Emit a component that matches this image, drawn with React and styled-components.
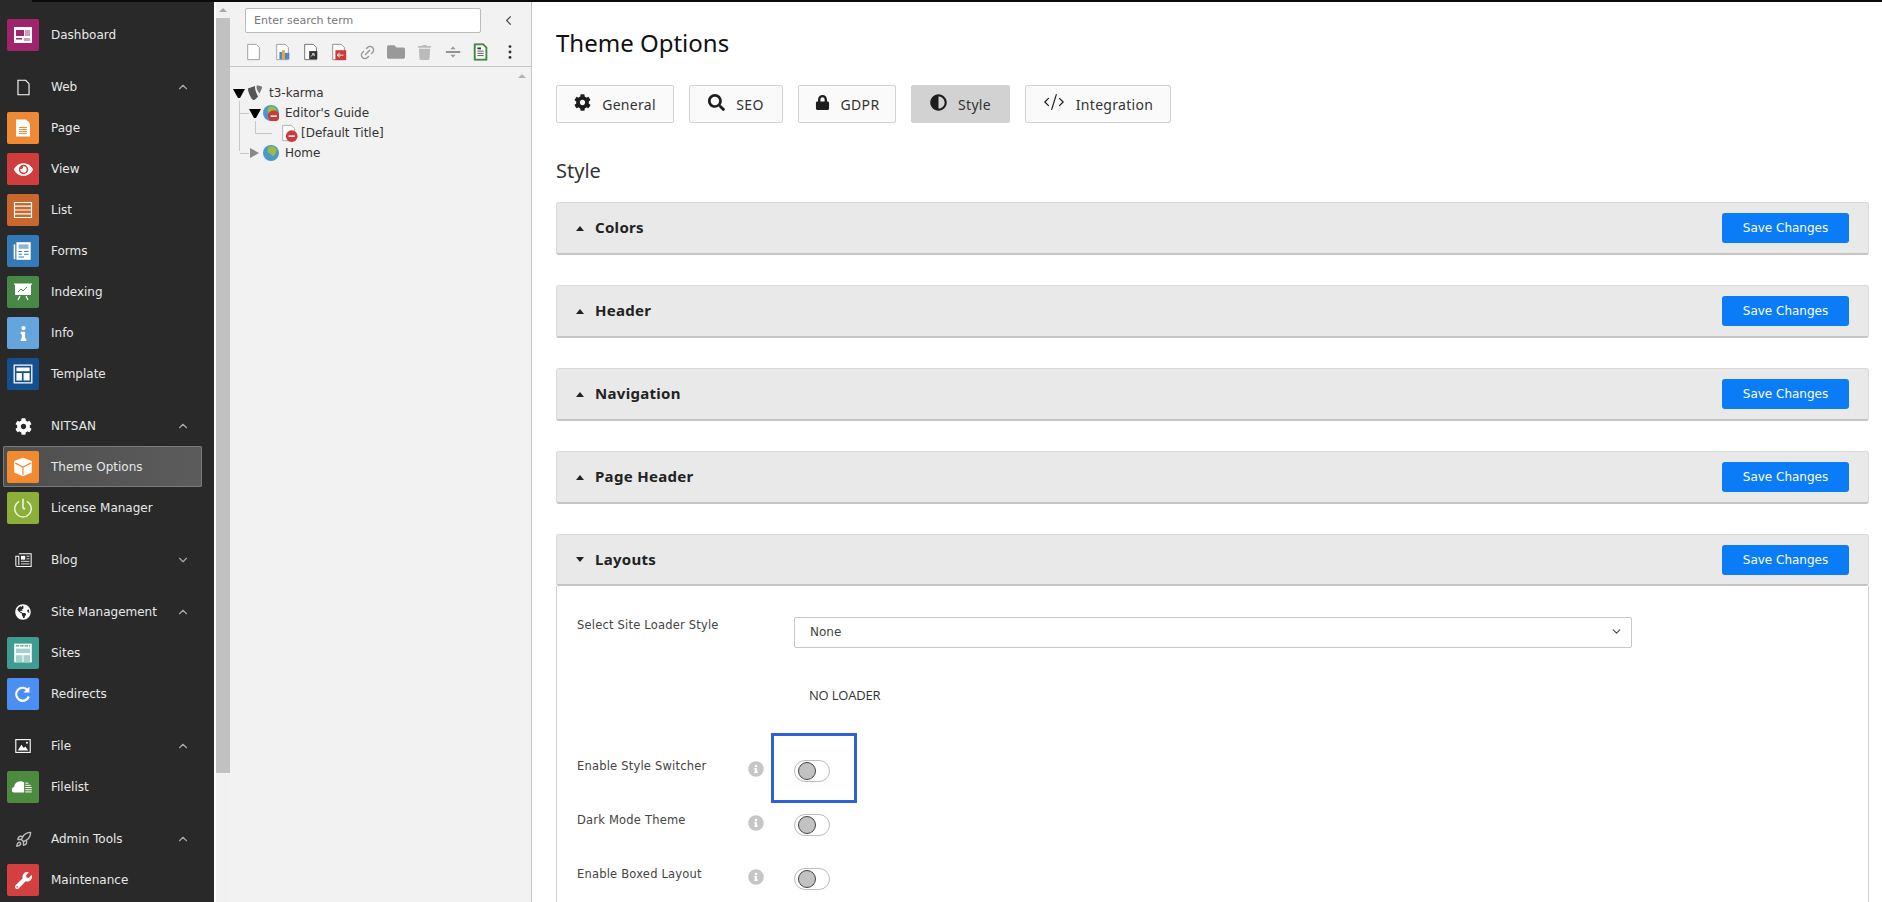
import React from 'react';
import styled, { createGlobalStyle } from 'styled-components';
import { ChevronUp, ChevronDown, ChevronLeft, Rocket, CodeXml, Link2 } from 'lucide-react';
import {
  FaCog,
  FaSearch,
  FaLock,
  FaAdjust,
  FaEye,
  FaInfo,
  FaWrench,
  FaGlobeAmericas,
  FaTrash,
  FaFolder,
  FaInfoCircle,
} from 'react-icons/fa';

const GlobalStyle = createGlobalStyle`
  html, body {
    margin: 0;
    padding: 0;
    height: 100%;
    overflow: hidden;
    background: #fff;
  }
  * { box-sizing: border-box; }
`;

const Shell = styled.div`
  width: 1882px;
  height: 902px;
  background: #292929;
  display: flex;
  flex-direction: column;
  overflow: hidden;
  font-family: 'DejaVu Sans', sans-serif;
  font-size: 12px;
`;

const TopBar = styled.div`
  height: 2px;
  margin-left: 32px;
  background: #0b0b0b;
  flex: none;
`;

const Columns = styled.div`
  flex: 1;
  display: flex;
  min-height: 0;
`;

/* module menu */
const Sidebar = styled.nav`
  width: 214px;
  flex: none;
  padding-top: 12px;
  background: #292929;
  color: #e8e8e8;
`;

const Group = styled.div`
  margin-top: 11px;
`;

const Row = styled.div`
  height: 41px;
  margin: 0 12px 0 3px;
  padding: 5px 0 4px 4px;
  display: flex;
  align-items: center;
  gap: 12px;
  border-radius: 2px;
  ${p =>
    p.$active &&
    `
    background: linear-gradient(90deg, #4e4e4e, #5c5c5c);
    box-shadow: inset 0 0 0 1px #7a7a7a;
  `}
`;

const Tile = styled.span`
  width: 32px;
  height: 32px;
  flex: none;
  border-radius: 2px;
  display: flex;
  align-items: center;
  justify-content: center;
  color: #fff;
  background: ${p => p.$color || 'transparent'};
`;

const RowLabel = styled.span`
  flex: 1;
  white-space: nowrap;
`;

const Caret = styled.span`
  display: flex;
  width: 14px;
  margin-right: 12px;
  color: #a8a8a8;
`;

/* page tree scrollbar */
const OuterScroll = styled.div`
  width: 16px;
  flex: none;
  border-left: 2px solid #fff;
  background: #f1f1f1;
  display: flex;
  flex-direction: column;
`;

const ScrollArrow = styled.div`
  height: 16px;
  flex: none;
  display: flex;
  align-items: center;
  justify-content: center;
  &::before {
    content: '';
    border-left: 4px solid transparent;
    border-right: 4px solid transparent;
    border-bottom: 4px solid #a8a8a8;
  }
`;

const ScrollThumb = styled.div`
  height: 755px;
  background: #c1c1c1;
`;

/* page tree */
const TreePanel = styled.aside`
  width: 302px;
  flex: none;
  position: relative;
  background: #f2f2f2;
  border-right: 1px solid #c6c6c6;
  color: #333;
`;

const TreeHead = styled.div`
  height: 65px;
  border-bottom: 1px solid #c4c4c4;
  padding: 6px 0 0 15px;
`;

const SearchRow = styled.div`
  display: flex;
  align-items: center;
  height: 25px;
`;

const SearchInput = styled.div`
  width: 236px;
  height: 25px;
  background: #fff;
  border: 1px solid #bbb;
  border-radius: 2px;
  padding: 0 8px;
  display: flex;
  align-items: center;
  color: #777;
  font-size: 11px;
`;

const Collapse = styled.span`
  display: flex;
  margin-left: 20px;
  color: #555;
`;

const Tools = styled.div`
  display: flex;
  margin: 7px 0 0 -5px;
`;

const Tool = styled.span`
  width: 28.4px;
  height: 24px;
  flex: none;
  display: flex;
  align-items: center;
  justify-content: center;
  color: ${p => p.$color || '#999'};
`;

const TreeArrow = styled.div`
  position: absolute;
  top: 72px;
  right: 5px;
  border-left: 4px solid transparent;
  border-right: 4px solid transparent;
  border-bottom: 4px solid #b4b4b4;
`;

const TreeBody = styled.div`
  padding: 16px 0 0 3px;
`;

const Branch = styled.ul`
  list-style: none;
  margin: 0;
  padding: 0 0 0 ${p => p.$indent || 0}px;
  position: relative;
  &::before {
    content: ${p => (p.$lines ? "''" : 'none')};
    position: absolute;
    left: 6px;
    top: -2px;
    height: ${p => p.$lines}px;
    border-left: 1px solid #c8c8c8;
  }
`;

const Leaf = styled.li`
  position: relative;
  &::before {
    content: ${p => (p.$elbow ? "''" : 'none')};
    position: absolute;
    left: -${p => p.$back}px;
    top: 10px;
    width: ${p => p.$elbow}px;
    border-top: 1px solid #c8c8c8;
  }
`;

const TreeRow = styled.div`
  height: 20px;
  display: flex;
  align-items: center;
  white-space: nowrap;
`;

const Twisty = styled.span`
  width: 12px;
  flex: none;
  margin-right: 2px;
  position: relative;
  &::before {
    content: '';
    display: block;
    ${p =>
      p.$open
        ? `
      border-left: 5px solid transparent;
      border-right: 5px solid transparent;
      border-top: 9px solid #000;
    `
        : `
      border-top: 5px solid transparent;
      border-bottom: 5px solid transparent;
      border-left: 9px solid #888;
      margin-left: 1px;
    `}
  }
`;

const NodeIcon = styled.span`
  width: 16px;
  height: 16px;
  flex: none;
  margin-right: ${p => p.$gap ?? 6}px;
  display: flex;
  align-items: center;
  justify-content: center;
  svg { flex: none; }
`;

/* main content */
const Main = styled.main`
  flex: 1;
  min-width: 0;
  background: #fff;
  padding: 25px 13px 0 24px;
  color: #333;
  font-family: 'Noto Sans', sans-serif;
`;

const Title = styled.h1`
  margin: 0 0 26px;
  font-size: 24px;
  line-height: 32px;
  font-weight: 400;
  color: #111;
`;

const Tabs = styled.div`
  display: flex;
  gap: 15px;
  margin-bottom: 34px;
`;

const TabButton = styled.button`
  height: 38px;
  padding: 0;
  width: ${p => p.$width}px;
  display: flex;
  align-items: center;
  justify-content: center;
  gap: 11px;
  border: 1px solid #d2d2d2;
  border-radius: 2px;
  background: ${p => (p.$active ? '#d2d2d2' : '#fafafa')};
  color: #333;
  font-family: inherit;
  font-size: 14px;
  letter-spacing: 0.3px;
  svg { color: #1d1d1d; margin-top: -4px; }
`;

const Heading = styled.h2`
  margin: 0 0 17px;
  font-size: 20px;
  line-height: 28px;
  font-weight: 400;
  color: #333;
`;

const Panel = styled.section`
  margin-bottom: ${p => (p.$open ? 31 : 30)}px;
`;

const PanelHead = styled.div`
  height: ${p => (p.$open ? 52 : 53)}px;
  display: flex;
  align-items: center;
  padding: 0 19px;
  background: #e9e9e9;
  border: 1px solid #dadada;
  border-bottom: 2px solid #c4c4c4;
  border-radius: 3px;
`;

const PanelTitle = styled.span`
  flex: 1;
  display: flex;
  align-items: center;
  gap: 11px;
  margin-top: -2px;
  font-size: 15px;
  font-weight: 700;
  letter-spacing: 0.3px;
  color: #222;
  &::before {
    content: '';
    margin-top: 2px;
    border-left: 4px solid transparent;
    border-right: 4px solid transparent;
    ${p => (p.$open ? 'border-top: 5px solid #222;' : 'border-bottom: 5px solid #222;')}
  }
`;

const SaveButton = styled.button`
  width: 127px;
  height: 30px;
  border: 0;
  border-radius: 3px;
  background: #0a7cf7;
  color: #fff;
  font-family: 'DejaVu Sans', sans-serif;
  font-size: 12px;
  padding: 0;
`;

const PanelBody = styled.div`
  border: solid #cfcfcf;
  border-width: 0 1px;
  padding: 31px 0 0 20px;
  height: 340px;
  font-family: 'DejaVu Sans', sans-serif;
`;

const FieldRow = styled.div`
  display: grid;
  grid-template-columns: 171px 16px 1fr;
  margin-top: ${p => p.$top || 0}px;
`;

const FieldLabel = styled.label`
  font-size: 11.5px;
  line-height: ${p => p.$line || 12}px;
  color: #444;
  letter-spacing: 0.2px;
`;

const Hint = styled.span`
  display: flex;
  margin-top: 1px;
  color: #c6c6c6;
`;

const SelectBox = styled.div`
  margin-left: 30px;
  width: 838px;
  height: 31px;
  border: 1px solid #c8c8c8;
  border-radius: 2px;
  padding: 0 8px 2px 15px;
  display: flex;
  align-items: center;
  justify-content: space-between;
  font-size: 12px;
  color: #444;
`;

const LoaderPreview = styled.div`
  margin: 38px 0 0 232px;
  font-family: 'Open Sans', sans-serif;
  font-size: 13px;
  line-height: 18px;
  color: #333;
  letter-spacing: -0.2px;
`;

const ToggleCell = styled.div`
  margin-left: 30px;
  position: relative;
  width: 36px;
`;

const Toggle = styled.span`
  width: 36px;
  height: 22px;
  display: flex;
  align-items: center;
  padding-left: 3px;
  background: #fff;
  border: 1px solid #bcbcbc;
  border-radius: 11px;
  &::before {
    content: '';
    width: 16px;
    height: 16px;
    border-radius: 50%;
    background: #c2c2c2;
    border: 1px solid #444;
  }
`;

const Highlight = styled.span`
  position: absolute;
  left: -23px;
  top: -27px;
  width: 86px;
  height: 70px;
  border: 3px solid #2e60d8;
`;

/* module icons, drawn on a 32px tile */
const Svg = ({ size = 20, children, ...rest }) => (
  <svg width={size} height={size} viewBox="0 0 20 20" fill="none" {...rest}>
    {children}
  </svg>
);

const DashboardIcon = () => (
  <Svg size={20}>
    <rect x="1" y="2" width="18" height="16" fill="#fff" />
    <rect x="3" y="5" width="8" height="6" fill="#a0246b" />
    <rect x="12" y="5" width="5" height="6" fill="#d29cbc" />
    <rect x="3" y="13" width="6" height="1.5" fill="#a0246b" />
    <rect x="11" y="13" width="6" height="3" fill="#d29cbc" />
  </Svg>
);

const PageIcon = () => (
  <Svg size={20}>
    <path d="M3 1.500h10l4 4v13H3z" fill="#fff" />
    <path d="M6 9.500h8M6 11.500h8M6 13.500h8M6 15.500h8" stroke="#ee8a35" />
  </Svg>
);

const ListIcon = () => (
  <Svg size={20}>
    <path d="M1.500 2.500h17v15h-17zM1.500 6.200h17M1.500 10h17M1.500 13.800h17" stroke="#fff" strokeWidth="1.200" />
  </Svg>
);

const FormsIcon = () => (
  <Svg size={22}>
    <rect x="4" y="2" width="13" height="16" fill="#fff" />
    <rect x="1.500" y="4" width="1.500" height="13.500" fill="#fff" />
    <rect x="6" y="4" width="9" height="4" fill="#8fb4d6" />
    <path d="M6 10.500h3M11 10.500h4M6 13h3M11 13h4M6 15.500h5" stroke="#337ab7" />
  </Svg>
);

const IndexingIcon = () => (
  <Svg size={20}>
    <rect x="2" y="2" width="16" height="11" fill="#fff" />
    <rect x="1" y="1.500" width="18" height="1.200" fill="#fff" />
    <path d="M5 10l3-3 2 2 4-4" stroke="#478847" />
    <path d="M7 14l-2 4M13 14l2 4" stroke="#fff" strokeWidth="1.200" />
  </Svg>
);

const TemplateIcon = () => (
  <Svg size={22}>
    <path d="M2 2h16v16H2z" stroke="#fff" strokeWidth="1.200" />
    <path d="M4 4h12v3.500H4zM4 9h5v7H4zM10.500 9H16v7h-5.500z" fill="#fff" />
  </Svg>
);

const CubeIcon = () => (
  <Svg size={22}>
    <path d="M10 1.500l8 3v10.500l-8 3.500-8-3.500V4.500z" fill="#fff" />
    <path d="M3 6.500l7 3.500 7-3.500M10 10v7" stroke="#f28a30" strokeWidth="1.100" />
  </Svg>
);

const LicenseIcon = () => (
  <Svg size={22}>
    <path d="M6.500 4a7.500 7.500 0 1 0 7 0" stroke="#fff" strokeWidth="1.300" opacity="0.85" />
    <path d="M10 1.500V10.500M10 10.500h2" stroke="#fff" strokeWidth="1.500" opacity="0.85" />
  </Svg>
);

const SitesIcon = () => (
  <Svg size={22}>
    <rect x="2" y="1.500" width="16" height="17" fill="#fff" />
    <path d="M3.500 3.500h13" stroke="#3f9c90" strokeDasharray="3 1" />
    <rect x="3.500" y="6" width="13" height="4" fill="#a6cfc9" />
    <rect x="3.500" y="12" width="6" height="6.500" fill="#a6cfc9" />
    <rect x="10.500" y="12" width="6" height="6.500" fill="#a6cfc9" />
  </Svg>
);

const RedirectIcon = () => (
  <Svg size={20}>
    <path d="M15 6.500a6.500 6.500 0 1 0 .8 6" stroke="#fff" strokeWidth="2.200" />
    <path d="M16.500 2.500v6h-6z" fill="#fff" />
  </Svg>
);

const FilelistIcon = () => (
  <Svg size={22}>
    <path d="M2.500 15a2.500 2.500 0 0 1-.5-5 5.500 5.500 0 0 1 9-4v9z" fill="#fff" />
    <path d="M12 6.500h3M12 8.500h5M12 10.500h6M12 12.500h6M12 14.500h6" stroke="#fff" strokeWidth="0.900" />
  </Svg>
);

const WebIcon = () => (
  <Svg size={17}>
    <path d="M3.500 1.500h9l4 4v13h-13z" stroke="#fff" strokeWidth="1.300" />
  </Svg>
);

const BlogIcon = () => (
  <Svg size={17}>
    <path d="M4.500 2h14.500v15H2.500a1.500 1.500 0 0 1-1.500-1.500V5h3.500v10.500" stroke="#fff" strokeWidth="1.200" />
    <rect x="7" y="4.500" width="5" height="4.500" fill="#fff" />
    <path d="M13.500 5h3.500M13.500 8h3.500M7 11h10M7 14h10" stroke="#fff" />
  </Svg>
);

const ImageIcon = () => (
  <Svg size={16}>
    <rect x="1" y="2" width="18" height="16" stroke="#fff" strokeWidth="1.400" />
    <path d="M3.500 15.500l4.500-7 3 4 2-2 3.500 5z" fill="#fff" />
    <circle cx="15" cy="6" r="1.300" fill="#fff" />
  </Svg>
);

const menu = [
  { label: 'Dashboard', color: '#a0246b', icon: <DashboardIcon /> },
  {
    label: 'Web',
    icon: <WebIcon />,
    open: true,
    items: [
      { label: 'Page', color: '#ee8a35', icon: <PageIcon /> },
      { label: 'View', color: '#d13d3d', icon: <FaEye size={19} /> },
      { label: 'List', color: '#c8682f', icon: <ListIcon /> },
      { label: 'Forms', color: '#337ab7', icon: <FormsIcon /> },
      { label: 'Indexing', color: '#478847', icon: <IndexingIcon /> },
      { label: 'Info', color: '#65a5dd', icon: <FaInfo size={15} /> },
      { label: 'Template', color: '#144f8e', icon: <TemplateIcon /> },
    ],
  },
  {
    label: 'NITSAN',
    icon: <FaCog size={17} />,
    open: true,
    items: [
      { label: 'Theme Options', color: '#f28a30', icon: <CubeIcon />, active: true },
      { label: 'License Manager', color: '#8caf3a', icon: <LicenseIcon /> },
    ],
  },
  { label: 'Blog', icon: <BlogIcon />, open: false, items: [] },
  {
    label: 'Site Management',
    icon: <FaGlobeAmericas size={16} />,
    open: true,
    items: [
      { label: 'Sites', color: '#3f9c90', icon: <SitesIcon /> },
      { label: 'Redirects', color: '#4b8ff2', icon: <RedirectIcon /> },
    ],
  },
  {
    label: 'File',
    icon: <ImageIcon />,
    open: true,
    items: [{ label: 'Filelist', color: '#4b8a3f', icon: <FilelistIcon /> }],
  },
  {
    label: 'Admin Tools',
    icon: <Rocket size={17} color="#bbb" />,
    open: true,
    items: [{ label: 'Maintenance', color: '#d43f3f', icon: <FaWrench size={17} /> }],
  },
];

const MenuItem = ({ item }) => (
  <Row $active={item.active}>
    <Tile $color={item.color}>{item.icon}</Tile>
    <RowLabel>{item.label}</RowLabel>
  </Row>
);

const MenuGroup = ({ group }) => (
  <Group>
    <Row>
      <Tile>{group.icon}</Tile>
      <RowLabel>{group.label}</RowLabel>
      <Caret>{group.open ? <ChevronUp size={14} /> : <ChevronDown size={14} />}</Caret>
    </Row>
    {group.items.map(item => (
      <MenuItem key={item.label} item={item} />
    ))}
  </Group>
);

/* tree toolbar glyphs */
const FileGlyph = ({ children, stroke = '#999', fill = '#fff' }) => (
  <Svg size={18}>
    <path d="M3 1.500h9.500L16 5v13.500H3z" fill={fill} stroke={stroke} />
    {children}
  </Svg>
);

const RedBadge = () => (
  <>
    <circle cx="13" cy="13.500" r="6.500" fill="#c83c3c" />
    <rect x="9.500" y="12.700" width="7" height="1.600" fill="#fff" />
  </>
);

const Typo3Logo = () => (
  <Svg size={16} viewBox="1 1 18 18">
    <path d="M2 5L10 2c-.5 3 1.500 9 3.500 12-2 2.500-4 4-5 4C6 18 2 9 2 5z" fill="#555" />
    <path d="M12 1.500c2 0 6 .5 6 2 0 1-1.500 4-3 7C13 8 11 4 12 1.500z" fill="#777" />
  </Svg>
);

const GlobeGlyph = ({ badge }) => (
  <Svg size={16} viewBox="1 1 18 18">
    <circle cx="10" cy="10" r="9" fill="#4d97cf" />
    <path d="M8 3c3-1.500 7 0 8.500 3.500L15 11l-3 3-2-3-3-1-1-4z" fill="#9bbf3c" />
    {badge && <RedBadge />}
  </Svg>
);

const tools = [
  <FileGlyph />,
  <FileGlyph>
    <rect x="6" y="10" width="3" height="8" fill="#5a82c8" />
    <rect x="9" y="8" width="3" height="10" fill="#e0a830" />
    <rect x="12" y="11" width="5" height="7" fill="#5a82c8" />
  </FileGlyph>,
  <FileGlyph stroke="#666">
    <rect x="8" y="9" width="9" height="9" fill="#333" />
    <path d="M10 15l3-3M11 12h2.500v2.500" stroke="#fff" />
  </FileGlyph>,
  <FileGlyph stroke="#888">
    <rect x="6" y="8" width="12" height="11" fill="#c83c3c" />
    <path d="M8 13.500h7M8 13.500l3-2.500M8 13.500l3 2.500" stroke="#fff" />
  </FileGlyph>,
  <Link2 size={17} transform="rotate(-45)" />,
  <FaFolder size={18} />,
  <FaTrash size={15} color="#bbb" />,
  <Svg size={18}>
    <path d="M2 10h16" stroke="#666" strokeWidth="1.500" />
    <path d="M7 7l3-3 3 3zM7 13l3 3 3-3z" fill="#999" />
  </Svg>,
  <FileGlyph stroke="#3b8a3b">
    <path d="M3 1.500h9.500L16 5v13.500H3z" stroke="#3b8a3b" strokeWidth="2" />
    <path d="M6 9h7M6 11.500h7M6 14h7" stroke="#444" />
    <rect x="6" y="5" width="4" height="2" fill="#333" />
  </FileGlyph>,
  <Svg size={18}>
    <circle cx="10" cy="4" r="1.600" fill="#333" />
    <circle cx="10" cy="10" r="1.600" fill="#333" />
    <circle cx="10" cy="16" r="1.600" fill="#333" />
  </Svg>,
];

const PageTree = () => (
  <TreePanel>
    <TreeHead>
      <SearchRow>
        <SearchInput>Enter search term</SearchInput>
        <Collapse>
          <ChevronLeft size={15} />
        </Collapse>
      </SearchRow>
      <Tools>
        {tools.map((glyph, i) => (
          <Tool key={i}>{glyph}</Tool>
        ))}
      </Tools>
    </TreeHead>
    <TreeArrow />
    <TreeBody>
      <Branch>
        <Leaf>
          <TreeRow>
            <Twisty $open />
            <NodeIcon>
              <Typo3Logo />
            </NodeIcon>
            t3-karma
          </TreeRow>
          <Branch $indent={16} $lines={50}>
            <Leaf $elbow={9} $back={9}>
              <TreeRow>
                <Twisty $open />
                <NodeIcon>
                  <GlobeGlyph badge />
                </NodeIcon>
                Editor's Guide
              </TreeRow>
              <Branch $indent={32} $lines={12}>
                <Leaf $elbow={17} $back={26}>
                  <TreeRow>
                    <NodeIcon $gap={4}>
                      <FileGlyph stroke="#aaa">
                        <RedBadge />
                      </FileGlyph>
                    </NodeIcon>
                    [Default Title]
                  </TreeRow>
                </Leaf>
              </Branch>
            </Leaf>
            <Leaf $elbow={9} $back={9}>
              <TreeRow>
                <Twisty />
                <NodeIcon>
                  <GlobeGlyph />
                </NodeIcon>
                Home
              </TreeRow>
            </Leaf>
          </Branch>
        </Leaf>
      </Branch>
    </TreeBody>
  </TreePanel>
);

const tabs = [
  { label: 'General', width: 118, icon: <FaCog size={17} /> },
  { label: 'SEO', width: 94, icon: <FaSearch size={17} /> },
  { label: 'GDPR', width: 98, icon: <FaLock size={15} /> },
  { label: 'Style', width: 99, icon: <FaAdjust size={17} />, active: true },
  { label: 'Integration', width: 146, icon: <CodeXml size={22} strokeWidth={1.3} /> },
];

const sections = ['Colors', 'Header', 'Navigation', 'Page Header'];

const PanelHeader = ({ title, open }) => (
  <PanelHead $open={open}>
    <PanelTitle $open={open}>{title}</PanelTitle>
    <SaveButton>Save Changes</SaveButton>
  </PanelHead>
);

const switches = [
  { label: 'Enable Style Switcher', top: 56, marked: true },
  { label: 'Dark Mode Theme', top: 32 },
  { label: 'Enable Boxed Layout', top: 32 },
];

const App = () => (
  <Shell>
    <GlobalStyle />
    <TopBar />
    <Columns>
      <Sidebar>
        <MenuItem item={menu[0]} />
        {menu.slice(1).map(group => (
          <MenuGroup key={group.label} group={group} />
        ))}
      </Sidebar>
      <OuterScroll>
        <ScrollArrow />
        <ScrollThumb />
      </OuterScroll>
      <PageTree />
      <Main>
        <Title>Theme Options</Title>
        <Tabs>
          {tabs.map(tab => (
            <TabButton key={tab.label} $width={tab.width} $active={tab.active}>
              {tab.icon}
              {tab.label}
            </TabButton>
          ))}
        </Tabs>
        <Heading>Style</Heading>
        {sections.map(title => (
          <Panel key={title}>
            <PanelHeader title={title} />
          </Panel>
        ))}
        <Panel $open>
          <PanelHeader title="Layouts" open />
          <PanelBody>
            <FieldRow>
              <FieldLabel $line={16}>Select Site Loader Style</FieldLabel>
              <span />
              <SelectBox>
                None
                <ChevronDown size={13} />
              </SelectBox>
            </FieldRow>
            <LoaderPreview>NO LOADER</LoaderPreview>
            {switches.map(row => (
              <FieldRow key={row.label} $top={row.top}>
                <FieldLabel>{row.label}</FieldLabel>
                <Hint>
                  <FaInfoCircle size={16} />
                </Hint>
                <ToggleCell>
                  <Toggle />
                  {row.marked && <Highlight />}
                </ToggleCell>
              </FieldRow>
            ))}
          </PanelBody>
        </Panel>
      </Main>
    </Columns>
  </Shell>
);

export default App;
